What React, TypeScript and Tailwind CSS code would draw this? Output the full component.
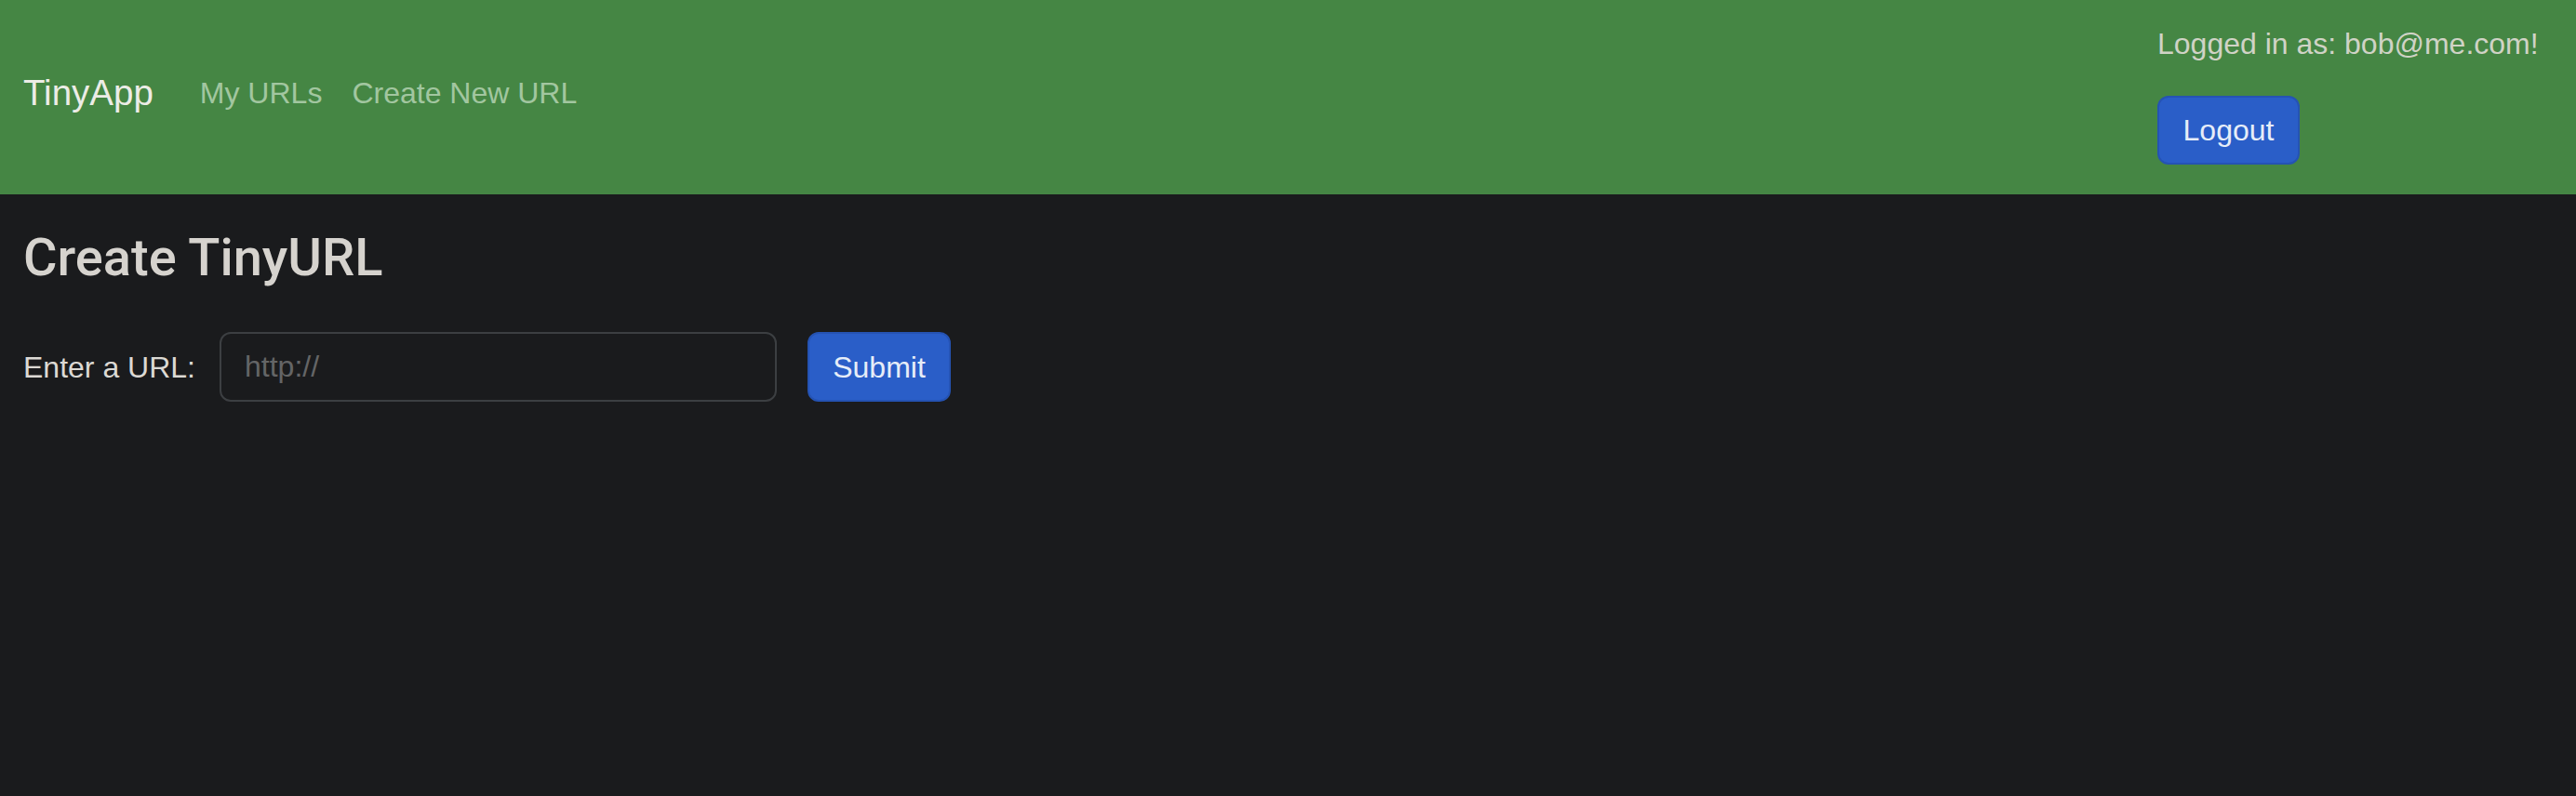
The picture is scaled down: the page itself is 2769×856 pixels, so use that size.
import React from "react";

export default function App() {
  return (
    <div
      className="min-h-[856px] w-full bg-[#1a1b1d] text-[#d9d6d1]"
      style={{ fontFamily: '"Liberation Sans", Arial, Helvetica, sans-serif' }}
    >
      <nav className="flex h-[209px] items-start justify-between bg-[#458644] pl-[25px] pr-[40px]">
        <div className="mt-[70px] flex items-center">
          <span className="mr-[34px] text-[38.5px] leading-[60px] text-[#ecece6]">TinyApp</span>
          <a className="px-[16px] text-[32px] leading-[48px] text-[#a2c6a0]">My URLs</a>
          <a className="px-[16px] text-[32px] leading-[48px] text-[#a2c6a0]">Create New URL</a>
        </div>
        <div className="mt-[23px] flex w-[410px] flex-col items-start">
          <p className="mb-[32px] whitespace-nowrap text-[32px] leading-[48px] text-[#d0d3c6]">
            Logged in as: bob@me.com!
          </p>
          <button className="flex h-[74px] w-[153px] items-center justify-center rounded-[12px] border-2 border-[#2553b3] bg-[#2a5ec8] text-[32px] text-[#e6edf8]">
            Logout
          </button>
        </div>
      </nav>
      <main className="px-[25px]">
        <h3
          className="mt-[36px] text-[56px] font-medium leading-[65px] text-[#d6d3ce]"
          style={{ fontFamily: 'Roboto, "Liberation Sans", Arial, sans-serif' }}
        >
          Create TinyURL
        </h3>
        <form className="mt-[47px] flex items-center">
          <label className="w-[211px] shrink-0 text-[32px] leading-[48px] text-[#dcd9d4]">Enter a URL:</label>
          <input
            type="text"
            placeholder="http://"
            className="h-[75px] w-[599px] rounded-[12px] border-2 border-[#3c3f42] bg-[#1a1b1d] px-[25px] text-[32px] text-[#d9d6d1] outline-none placeholder:text-[#646566]"
          />
          <button
            type="button"
            className="ml-[33px] flex h-[75px] w-[154px] items-center justify-center rounded-[12px] border-2 border-[#2553b3] bg-[#2a5ec8] text-[32px] text-[#e6edf8]"
          >
            Submit
          </button>
        </form>
      </main>
    </div>
  );
}
